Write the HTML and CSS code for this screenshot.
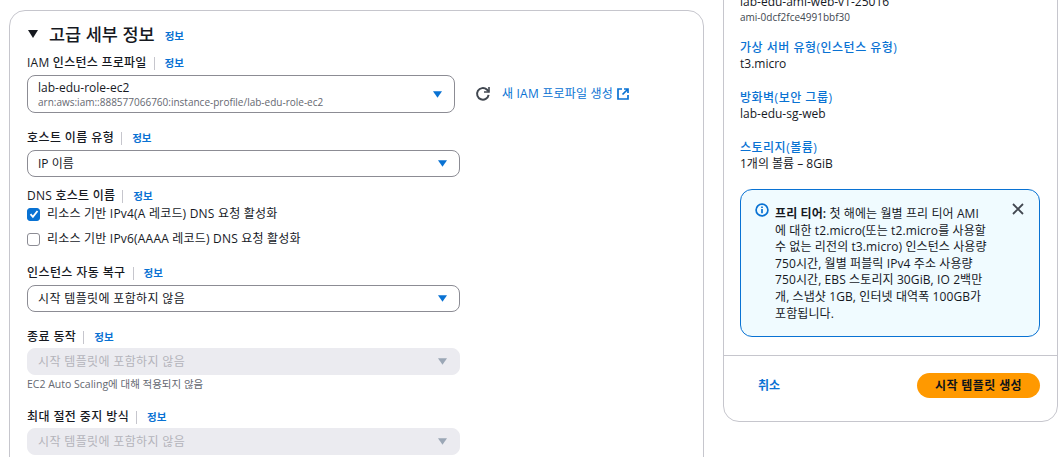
FILE: index.html
```html
<!DOCTYPE html>
<html lang="ko">
<head>
<meta charset="utf-8">
<title>시작 템플릿 생성</title>
<link rel="stylesheet" href="styles.css">
</head>
<body>
<div class="page">
  <main class="card main-card">
    <h2 class="section-title">
      <svg class="caret" width="10" height="8" viewBox="0 0 10 8"><path d="M0 0h10L5 8z" fill="#16191f"/></svg>
      <span>고급 세부 정보</span><a class="info info-head">정보</a>
    </h2>

    <div class="label-row first"><span class="label">IAM 인스턴스 프로파일</span><i class="sep"></i><a class="info">정보</a></div>
    <div class="iam-row">
      <div class="select select-tall">
        <div>
          <div class="value latin">lab-edu-role-ec2</div>
          <div class="sub">arn:aws:iam::888577066760:instance-profile/lab-edu-role-ec2</div>
        </div>
        <svg class="arrow" width="9" height="7" viewBox="0 0 10 7"><path d="M0 0h10L5 7z" fill="#0972d3"/></svg>
      </div>
      <svg class="refresh" width="16" height="16" viewBox="0 0 16 16" fill="none" stroke="#414750" stroke-width="2"><path d="M13.6 8.8A5.8 5.8 0 1 1 11.8 3.6L13.8 5.4"/><path d="M14 1v5h-5" stroke-width="1.6"/></svg>
      <a class="new-link">새 IAM 프로파일 생성</a>
      <svg class="ext" width="12" height="12" viewBox="0 0 12 12" fill="none" stroke="#0972d3" stroke-width="1.7"><path d="M5 1H1v10h10V7"/><path d="M7 1h4v4M11 1L5.5 6.5"/></svg>
    </div>

    <div class="label-row"><span class="label">호스트 이름 유형</span><i class="sep"></i><a class="info">정보</a></div>
    <div class="select">
      <span class="value latin">IP 이름</span>
      <svg class="arrow" width="9" height="7" viewBox="0 0 10 7"><path d="M0 0h10L5 7z" fill="#0972d3"/></svg>
    </div>

    <div class="label-row dns"><span class="label">DNS 호스트 이름</span><i class="sep"></i><a class="info">정보</a></div>
    <label class="check check-first">
      <span class="box on"><svg width="10" height="10" viewBox="0 0 10 10" fill="none" stroke="#fff" stroke-width="1.8"><path d="M1.5 5.2l2.4 2.6 4.6-5.8"/></svg></span>
      <span>리소스 기반 IPv4(A 레코드) DNS 요청 활성화</span>
    </label>
    <label class="check">
      <span class="box"></span>
      <span>리소스 기반 IPv6(AAAA 레코드) DNS 요청 활성화</span>
    </label>

    <div class="label-row recovery"><span class="label">인스턴스 자동 복구</span><i class="sep"></i><a class="info">정보</a></div>
    <div class="select">
      <span class="value">시작 템플릿에 포함하지 않음</span>
      <svg class="arrow" width="9" height="7" viewBox="0 0 10 7"><path d="M0 0h10L5 7z" fill="#0972d3"/></svg>
    </div>

    <div class="label-row tight"><span class="label">종료 동작</span><i class="sep"></i><a class="info">정보</a></div>
    <div class="select disabled">
      <span class="value">시작 템플릿에 포함하지 않음</span>
      <svg class="arrow" width="9" height="7" viewBox="0 0 10 7"><path d="M0 0h10L5 7z" fill="#9ba7b6"/></svg>
    </div>
    <div class="hint">EC2 Auto Scaling에 대해 적용되지 않음</div>

    <div class="label-row last tight"><span class="label">최대 절전 중지 방식</span><i class="sep"></i><a class="info">정보</a></div>
    <div class="select disabled">
      <span class="value">시작 템플릿에 포함하지 않음</span>
      <svg class="arrow" width="9" height="7" viewBox="0 0 10 7"><path d="M0 0h10L5 7z" fill="#9ba7b6"/></svg>
    </div>
  </main>

  <aside class="card side-card">
    <div class="side-body">
      <div class="value-text">lab-edu-ami-web-v1-25016</div>
      <div class="ami-id">ami-0dcf2fce4991bbf30</div>
      <a class="side-head">가상 서버 유형(인스턴스 유형)</a>
      <div class="value-text">t3.micro</div>
      <a class="side-head">방화벽(보안 그룹)</a>
      <div class="value-text">lab-edu-sg-web</div>
      <a class="side-head">스토리지(볼륨)</a>
      <div class="value-text">1개의 볼륨 – 8GiB</div>

      <div class="alert">
        <svg class="alert-icon" width="14" height="14" viewBox="0 0 14 14" fill="none" stroke="#0972d3" stroke-width="1.7"><circle cx="7" cy="7" r="5.9"/><path d="M7 6v4.2M7 3.4v1.6"/></svg>
        <p class="alert-text"><b>프리 티어:</b> 첫 해에는 월별 프리 티어 AMI<br>에 대한 t2.micro(또는 t2.micro를 사용할<br>수 없는 리전의 t3.micro) 인스턴스 사용량<br>750시간, 월별 퍼블릭 IPv4 주소 사용량<br>750시간, EBS 스토리지 30GiB, IO 2백만<br>개, 스냅샷 1GB, 인터넷 대역폭 100GB가<br>포함됩니다.</p>
        <svg class="close" width="12" height="12" viewBox="0 0 12 12" fill="none" stroke="#414750" stroke-width="1.8"><path d="M1 1l10 10M11 1L1 11"/></svg>
      </div>
    </div>
    <div class="side-foot">
      <a class="cancel">취소</a>
      <button class="primary">시작 템플릿 생성</button>
    </div>
  </aside>
</div>
</body>
</html>
```
FILE: styles.css
```css
* { box-sizing: border-box; }
html, body { margin: 0; height: 457px; overflow: hidden; background: #fff; }
body {
  font-family: "Open Sans", "Noto Sans CJK KR", sans-serif;
  font-size: 12px;
  line-height: 16px;
  color: #16191f;
}
a { color: #0972d3; }
.page {
  display: flex;
  align-items: flex-start;
  gap: 19px;
  padding-left: 9px;
  width: 1062px;
}
.card {
  background: #fff;
  border: 1px solid #c6c6cd;
  border-radius: 16px;
}
.main-card {
  width: 695px;
  height: 560px;
  margin-top: 10px;
  padding: 11px 17px;
}
.section-title {
  display: flex;
  align-items: center;
  margin: 0;
  height: 24px;
  font-size: 17.5px;
  font-weight: 500;
  line-height: 24px;
}
.caret { margin: 0 11px 0 1px; }
.info { font-size: 10.5px; font-weight: 600; letter-spacing: 0; }
.info-head { margin-left: 10px; margin-top: 3px; }
.label-row {
  display: flex;
  align-items: center;
  height: 16px;
  margin-top: 17px;
  margin-bottom: 4px;
}
.label-row.first { margin-top: 9px; margin-bottom: 4px; }
.label-row.dns { margin-top: 11px; margin-bottom: 2px; }
.label-row.recovery { margin-top: 18px; }
.label-row.tight { margin-bottom: 3px; }
.label-row.last { margin-top: 18px; }
.label { font-weight: 500; letter-spacing: .4px; }
.first .label, .dns .label { letter-spacing: .25px; }
.sep { width: 1px; height: 13px; background: #c6c6cd; margin: 0 10px 0 7px; }
.iam-row { display: flex; align-items: center; }
.select {
  display: flex;
  align-items: center;
  justify-content: space-between;
  width: 433px;
  height: 27px;
  padding: 0 10px;
  border: 1px solid #8c8c94;
  border-radius: 8px;
  background: #fff;
}
.select-tall { width: 428px; height: 38px; }
.value { letter-spacing: .35px; }
.value.latin { letter-spacing: 0; }
.select-tall .value { margin-top: 1px; }
.sub { font-size: 10px; line-height: 13px; color: #656871; }
.arrow { margin-right: 2px; flex: none; }
.refresh { margin-left: 20px; flex: none; }
.new-link { margin-left: 11px; font-size: 12px; letter-spacing: .2px; }
.ext { margin-left: 4px; }
.check { display: flex; align-items: center; gap: 7px; height: 16px; margin-top: 9px; letter-spacing: .2px; }
.check-first { margin-top: 2px; }
.box {
  display: flex;
  align-items: center;
  justify-content: center;
  width: 13px;
  height: 13px;
  border: 1.5px solid #8c8c94;
  border-radius: 3px;
}
.box.on { background: #0972d3; border-color: #0972d3; }
.disabled { background: #ebebf0; border-color: #ebebf0; color: #b4b4bb; }
.hint { font-size: 10.5px; line-height: 14px; color: #656871; margin-top: 2px; }
.side-card {
  width: 335px;
  height: 481px;
  margin-top: -59px;
  display: flex;
  flex-direction: column;
}
.side-body { padding: 52px 16px 0; height: 414px; border-bottom: 1px solid #c6c6cd; }
.ami-id { font-size: 10px; line-height: 14px; color: #414750; margin-bottom: 16px; }
.side-head { display: block; font-weight: 500; margin-top: 18px; letter-spacing: .5px; }
.ami-id + .side-head { margin-top: 0; }
.value-text { height: 16px; }
.alert {
  display: flex;
  align-items: flex-start;
  position: relative;
  width: 300px;
  height: 148px;
  margin-top: 17px;
  padding: 13px 14px;
  background: #f0fbff;
  border: 1px solid #0972d3;
  border-radius: 12px;
}
.alert-icon { flex: none; margin-right: 6px; }
.alert-text { margin: 3px 0 0; line-height: 16.6px; letter-spacing: .1px; white-space: nowrap; color: #16191f; }
.alert-text b { font-weight: 600; }
.close { position: absolute; right: 15px; top: 13px; }
.side-foot {
  display: flex;
  align-items: center;
  justify-content: space-between;
  padding: 17px 17px 0 34px;
}
.cancel { font-weight: 600; }
.primary {
  width: 123px;
  height: 25px;
  border: 0;
  border-radius: 13px;
  background: #ff9900;
  color: #0f141a;
  font: 600 12px/16px "Open Sans", "Noto Sans CJK KR", sans-serif;
  letter-spacing: .4px;
  padding: 0;
}
```
